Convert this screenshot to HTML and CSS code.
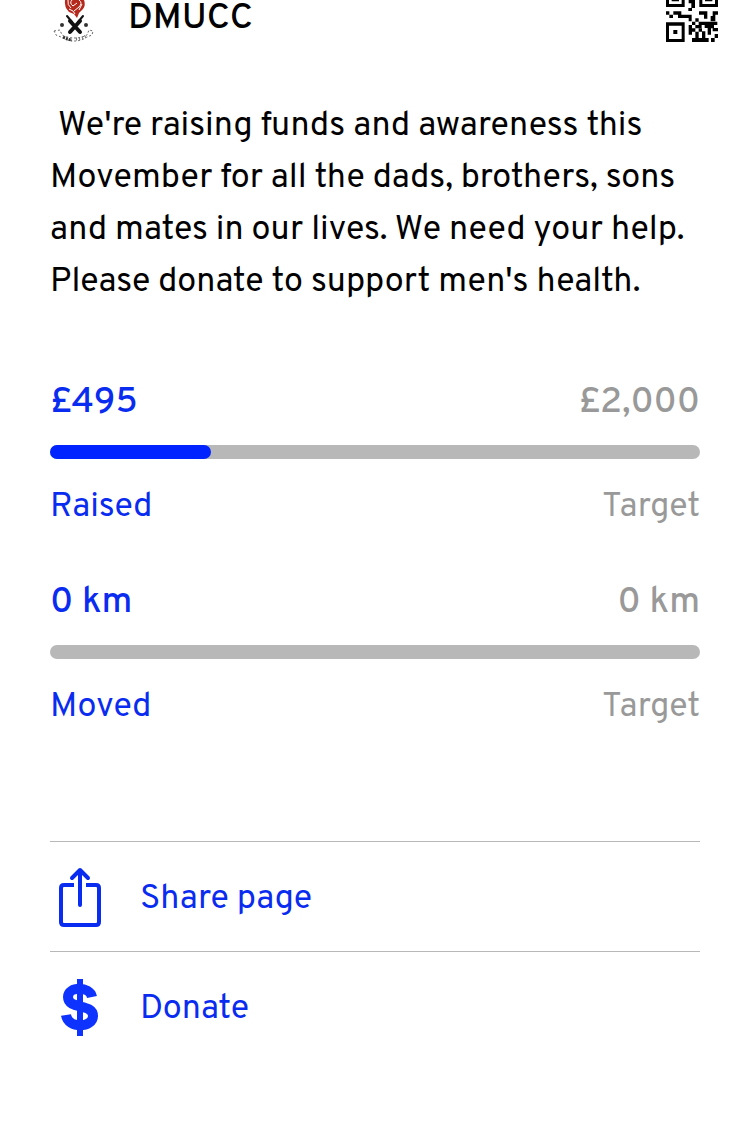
FILE: index.html
```
<!DOCTYPE html>
<html lang="en">

<head>
    <meta charset="UTF-8">
    <meta name="viewport" content="width=device-width, initial-scale=1.0">
    <title>DMUCC</title>
    <link rel="stylesheet" href="styles.css">
</head>

<body>
    <header class="team-bar">
        <svg class="team-logo" viewBox="0 0 50 44" aria-hidden="true">
            <path fill="#b5281c" d="M15 0h19q2 5-1 9l-4 4-2 5-3-4-5-2q-5-5-4-12z"/>
            <path fill="none" stroke="#fff" d="M18 0q-1 5 3 8M22 0q-3 3 1 6l4-3M29 0q4 3 0 7l-5 4M32 4l-3 6M19 9l4 2 2 3"/>
            <g stroke="#111" stroke-linecap="round">
                <path stroke-width="2" d="M17 16l5 6M33 16l-5 6"/>
                <path stroke-width="4" d="M20 21l10 11M30 21l-10 11"/>
            </g>
            <circle cx="12" cy="25" r="2" fill="#333"/>
            <circle cx="36" cy="25" r="2" fill="#333"/>
            <path fill="none" stroke="#666" stroke-dasharray="2 2" d="M4 31l6-1 2 5q13 6 25 0l2-5 4 1-1 4-5 2q-12 8-26 0l-5-2z"/>
            <path fill="none" stroke="#333" stroke-dasharray="2 1" stroke-width="3" d="M13 37q6 3 9 3"/>
            <path fill="none" stroke="#777" stroke-dasharray="1 2" stroke-width="3" d="M26 39q6 0 10-3"/>
        </svg>
        <h1>DMUCC</h1>
        <svg class="qr-code" viewBox="0 0 156 126" aria-hidden="true">
            <path d="M0 0h9v12h38V0h9v21H0zM17 0h22v4H17zM100 0h9v12h38V0h9v21h-56zM117 0h22v4h-22z"/>
            <path d="M68 0h19v24h-9v9H67v-9h9V10h-8zM0 34h10v10h11v10H10V44H0zM22 34h24v10h31v20h-9V54H36V44H22zM99 34h25v22h-10V44H99zM140 34h16v10h-8v20h-14V48h6z"/>
            <path fill-rule="evenodd" d="M0 67h56v59H0zM9 77v40h38V77zM22 90h12v12H22z"/>
            <path d="M88 55h10v10H88zM78 65h10v10H78zM68 75h10v29H68zM98 65h56v10h-10v10h-9v9h-10V84h-9V75h-9v9h-9zM88 75h10v10H88zM78 85h10v10H78zM98 85h10v10H98zM88 95h10v10H88zM108 94h10v10h-10zM140 84h16v10h-16zM125 94h10v10h-10zM78 114h10v-10h10v10h10v-10h10v10h10v12H78zM146 102h10v12h-10zM135 114h11v12h-11z"/>
        </svg>
    </header>
    <main>
        <p class="intro">&nbsp;We're raising funds and awareness this Movember for all the dads, brothers, sons and mates in our lives. We need your help. Please donate to support men's health.</p>
        <section class="progress">
            <div class="row amount">
                <span class="now">£495</span>
                <span>£2,000</span>
            </div>
            <div class="bar">
                <div class="bar-fill" style="width: 24.75%"></div>
            </div>
            <div class="row">
                <span class="now">Raised</span>
                <span>Target</span>
            </div>
        </section>
        <section class="progress">
            <div class="row amount">
                <span class="now">0 km</span>
                <span>0 km</span>
            </div>
            <div class="bar"></div>
            <div class="row">
                <span class="now">Moved</span>
                <span>Target</span>
            </div>
        </section>
        <ul class="actions">
            <li>
                <a href="#share">
                    <svg viewBox="0 0 60 60" aria-hidden="true">
                        <path fill="none" stroke="#0a2bf0" stroke-width="4" stroke-linecap="round" stroke-linejoin="round" d="M30 38V3M22 11l8-8 8 8"/>
                        <path fill="none" stroke="#0a2bf0" stroke-width="4" d="M24 18H14q-3 0-3 3v34q0 3 3 3h32q3 0 3-3V21q0-3-3-3H36"/>
                    </svg>
                    <span>Share page</span>
                </a>
            </li>
            <li>
                <a href="#donate">
                    <svg viewBox="0 0 60 60" aria-hidden="true">
                        <path fill="none" stroke="#0f33ff" stroke-width="10" d="M42 20C40 9 18 9 18 20C18 33 43 26 43 39C43 51 18 52 16 38"/>
                        <path stroke="#0f33ff" stroke-width="6" d="M30 2v57"/>
                    </svg>
                    <span>Donate</span>
                </a>
            </li>
        </ul>
    </main>
</body>

</html>
```
FILE: styles.css
```
* {
    margin: 0;
    padding: 0;
    box-sizing: border-box;
}

li {
    list-style: none;
}

body {
    background-color: #fff;
    color: #000;
    font-family: Overpass, Roboto, "Liberation Sans", sans-serif;
    font-size: 34px;
    line-height: 52px;
}

.team-bar {
    display: flex;
    align-items: flex-start;
    padding: 0 32px 0 50px;
}

.team-logo {
    width: 50px;
    height: 44px;
}

.team-bar h1 {
    flex: 1;
    margin-left: 28px;
    font-size: 36px;
    font-weight: 500;
    line-height: 38px;
}

.qr-code {
    width: 52px;
    height: 42px;
}

main {
    padding: 57px 50px 0;
}

.intro {
    margin-bottom: 68px;
}

.progress {
    margin-bottom: 43px;
}

.row {
    display: flex;
    justify-content: space-between;
    color: #999;
}

.row .now {
    color: #0a2bf0;
}

.amount {
    font-size: 36px;
    font-weight: 500;
}

.bar {
    height: 14px;
    margin: 16px 0 23px;
    border-radius: 7px;
    background-color: #b8b8b8;
}

.bar-fill {
    height: 14px;
    border-radius: 7px;
    background-color: #0023ff;
}

.actions {
    margin-top: 107px;
}

.actions li {
    border-top: 1px solid #b8b8b8;
}

.actions a {
    display: flex;
    align-items: center;
    height: 109px;
    gap: 30px;
    color: #0a2bf0;
    text-decoration: none;
}

.actions span {
    padding-top: 6px;
}

.actions svg {
    width: 60px;
    height: 60px;
}
```
